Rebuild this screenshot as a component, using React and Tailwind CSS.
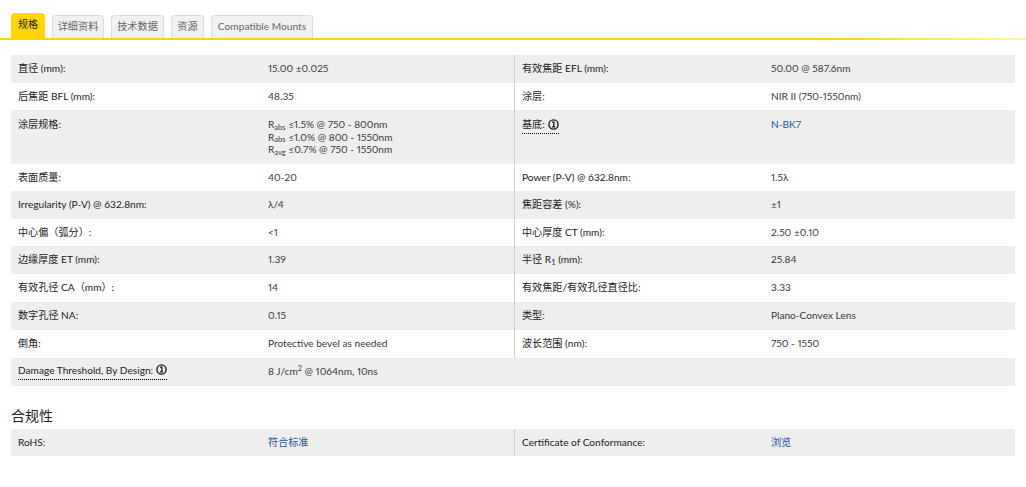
const Info = () => (
  <svg width="11" height="11" viewBox="0 0 12 12" className="inline-block ml-[3px] align-[-1.5px]" fill="none" stroke="#1a1a1a" strokeWidth="1.5">
    <circle cx="6" cy="6" r="5" />
    <path d="M4.4 3.4h2v5.2M4.2 8.7h3.6" strokeWidth="1.4" />
  </svg>
);
const Tip = ({ children }) => (
  <span className="border-b border-dotted border-black pb-[1px]">{children}<Info /></span>
);
const Link = ({ children }) => <span className="text-[#1c55a3]">{children}</span>;
const R = ({ s, children }) => <div className="leading-[12.5px]">R<sub className="text-[7.5px] leading-none">{s}</sub> {children}</div>;

const rows = [
  ["h-[28px]", "直径 (mm):", "15.00 ±0.025", "有效焦距 EFL (mm):", "50.00 @ 587.6nm", 1, 1],
  ["h-[27px]", "后焦距 BFL (mm):", "48.35", "涂层:", "NIR II (750-1550nm)", 0, 0],
  ["h-[54px]", "涂层规格:", <div className="mt-[1px]"><R s="abs">≤1.5% @ 750 - 800nm</R><R s="abs">≤1.0% @ 800 - 1550nm</R><R s="avg">≤0.7% @ 750 - 1550nm</R></div>, <Tip>基底:</Tip>, <Link>N-BK7</Link>, 1, 0],
  ["h-[27px]", "表面质量:", "40-20", "Power (P-V) @ 632.8nm:", "1.5λ", 0, 0],
  ["h-[28px]", "Irregularity (P-V) @ 632.8nm:", "λ/4", "焦距容差 (%):", "±1", 1, 1],
  ["h-[27px]", "中心偏（弧分）:", "<1", "中心厚度 CT (mm):", "2.50 ±0.10", 0, 0],
  ["h-[28px]", "边缘厚度 ET (mm):", "1.39", <span>半径 R<sub className="text-[7.5px] leading-none">1</sub> (mm):</span>, "25.84", 1, 0],
  ["h-[28px]", "有效孔径 CA（mm）:", "14", "有效焦距/有效孔径直径比:", "3.33", 0, 1],
  ["h-[28px]", "数字孔径 NA:", "0.15", "类型:", "Plano-Convex Lens", 1, 1],
  ["h-[28px]", "倒角:", "Protective bevel as needed", "波长范围 (nm):", "750 - 1550", 0, 1],
  ["h-[28px]", <Tip>Damage Threshold, By Design:</Tip>, <span>8 J/cm<sup className="text-[7.5px] leading-none">2</sup> @ 1064nm, 10ns</span>, "", "", 1, 1],
];

function Row({ h, a, b, c, d, gray, top, noDivider, lift }) {
  const bg = gray ? "bg-[#eeeeee]" : "bg-white";
  const align = top ? "items-start pt-[7px]" : lift ? "items-center pb-[1px]" : "items-center";
  return (
    <div className={`flex ${h} ${bg}`}>
      <div className={`w-[257px] shrink-0 pl-[7px] flex ${align} text-[#222222]`}>{a}</div>
      <div className={`w-[246px] shrink-0 flex ${align} text-[#3a3a3a] proportional-nums`}>{b}</div>
      <div className={`w-[257px] shrink-0 pl-[7px] flex ${align} text-[#222222] border-l ${noDivider ? "border-transparent" : "border-[#cfcfcf]"}`}>{c}</div>
      <div className={`flex-1 flex ${align} text-[#3a3a3a] proportional-nums`}>{d}</div>
    </div>
  );
}

const tabs = [
  ["详细资料", "w-[52px]"],
  ["技术数据", "w-[53px]"],
  ["资源", "w-[33px]"],
  ["Compatible Mounts", "w-[102px]"],
];

export default function App() {
  return (
    <div className="w-[1026px] h-[487px] bg-white overflow-hidden text-[10.15px] font-['Lato','Noto_Sans_CJK_SC',sans-serif]">
      <div className="flex items-end gap-[7px] h-[38px] pl-[11px]">
        <div className="w-[34px] h-[25px] flex items-center justify-center pb-[2px] bg-[#ffd500] rounded-t-[4px] text-[#222222] text-[10px]">规格</div>
        {tabs.map(([t, w]) => (
          <div key={t} className={`${w} h-[23px] flex items-center justify-center pb-[1px] bg-[#f1f1f1] border border-b-0 border-[#dddddd] rounded-t-[4px] text-[#666666] text-[10.2px] whitespace-nowrap`}>{t}</div>
        ))}
      </div>
      <div className="h-[2px] bg-[linear-gradient(to_right,#ffd500_81%,#fdf6b8_100%)]"></div>
      <div className="mt-[15px] ml-[11px] w-[1004px] flex flex-col">
        {rows.map((r, i) => (
          <Row key={i} h={r[0]} a={r[1]} b={r[2]} c={r[3]} d={r[4]} gray={r[5]} lift={r[6]} top={i === 2} noDivider={i === 10} />
        ))}
      </div>
      <h2 className="ml-[11px] mt-[20px] h-[23px] text-[14px] leading-[20px] text-[#222222]">合规性</h2>
      <div className="ml-[11px] w-[1004px]">
        <Row h="h-[27px]" a="RoHS:" b={<Link>符合标准</Link>} c="Certificate of Conformance:" d={<Link>浏览</Link>} gray />
      </div>
    </div>
  );
}
